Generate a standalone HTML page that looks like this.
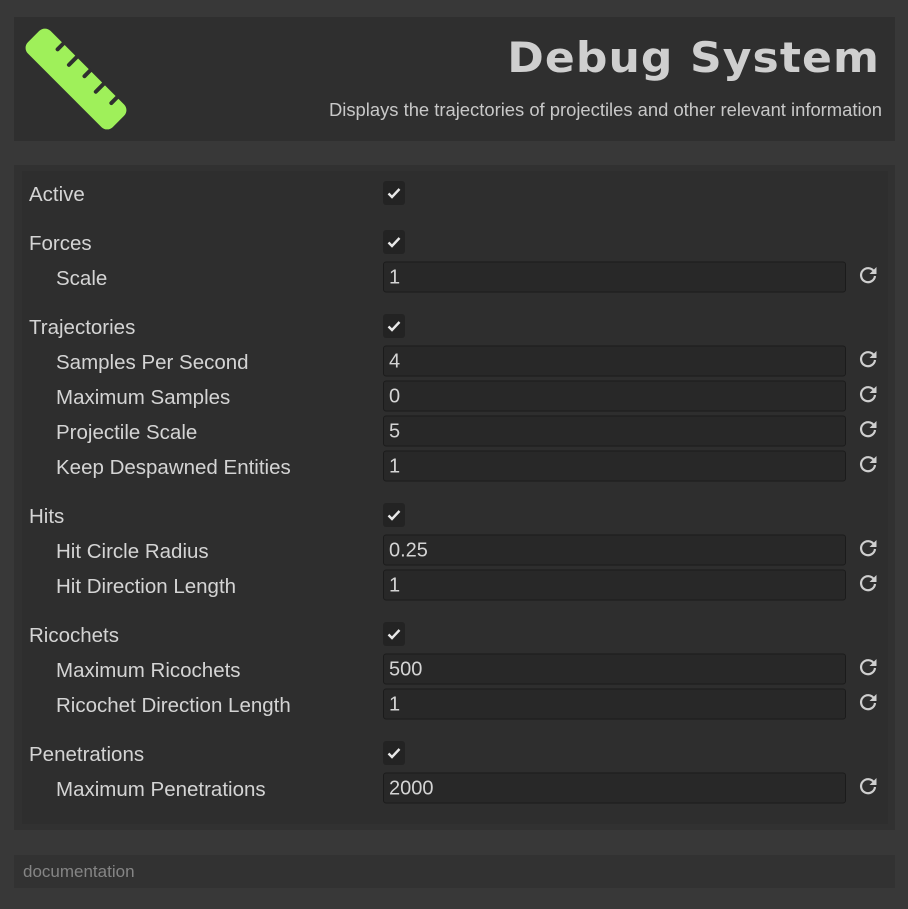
<!DOCTYPE html>
<html><head><meta charset="utf-8"><style>
*{margin:0;padding:0;box-sizing:border-box}
body{width:908px;height:909px;background:#383838;font-family:"Liberation Sans",sans-serif;position:relative;overflow:hidden;color:#d2d2d2}
.hdr{position:absolute;left:14px;top:17px;width:881px;height:124px;background:#2f2f2f}
.title{position:absolute;right:28px;top:33px;font-size:42px;font-weight:bold;color:#cfcfcf;letter-spacing:1px;transform:scaleX(1.05);transform-origin:right center;font-family:"DejaVu Sans",sans-serif}
.sub{position:absolute;right:26px;top:99px;font-size:18.4px;color:#c8c8c8}
.main{position:absolute;left:14px;top:165px;width:881px;height:665px;background:#313131}
.inner{position:absolute;left:22px;top:171px;width:866px;height:653px;background:#2e2e2e}
.lbl{position:absolute;font-size:20.5px;color:#d4d4d4;transform:translateY(-50%);margin-top:2px}
.cb{position:absolute;left:383px;width:22px;height:24px;background:#232323;border-radius:3px;transform:translateY(-50%)}
.cb svg{position:absolute;left:3px;top:4px}
.fld{position:absolute;left:383px;width:463px;height:31px;background:#282828;border:1px solid #1b1b1b;border-radius:3px;transform:translateY(-50%);font-size:20px;padding-left:5px;line-height:31px;color:#d4d4d4}
.rs{position:absolute;left:857px;transform:translateY(-50%)}
.foot{position:absolute;left:14px;top:855px;width:881px;height:33px;background:#323232}
.foot span{position:absolute;left:9px;top:7px;font-size:17px;color:#858585}
</style></head><body>
<div class="hdr"></div>
<svg style="position:absolute;left:0;top:0" width="160" height="150">
<g transform="translate(76,79) rotate(45)">
<rect x="-60" y="-16" width="120" height="32" rx="8" fill="#9ff05a"/>
<g stroke="#2f2f2f" stroke-width="4" stroke-linecap="round">
<line x1="-34" y1="-16" x2="-34" y2="-8"/>
<line x1="-15" y1="-16" x2="-15" y2="-5"/>
<line x1="4" y1="-16" x2="4" y2="-8"/>
<line x1="23" y1="-16" x2="23" y2="-5"/>
<line x1="42" y1="-16" x2="42" y2="-8"/>
</g></g></svg>
<div class="title">Debug System</div>
<div class="sub">Displays the trajectories of projectiles and other relevant information</div>
<div class="main"></div><div class="inner"></div>
<div class="foot"><span>documentation</span></div>
<div id="rows"></div>
<script>
var rows=[["Active",193,0,null],["Forces",242,0,null],["Scale",277,1,"1"],["Trajectories",326,0,null],["Samples Per Second",361,1,"4"],["Maximum Samples",396,1,"0"],["Projectile Scale",431,1,"5"],["Keep Despawned Entities",466,1,"1"],["Hits",515,0,null],["Hit Circle Radius",550,1,"0.25"],["Hit Direction Length",585,1,"1"],["Ricochets",634,0,null],["Maximum Ricochets",669,1,"500"],["Ricochet Direction Length",704,1,"1"],["Penetrations",753,0,null],["Maximum Penetrations",788,1,"2000"]];
var h="";
rows.forEach(function(r){
h+='<div class="lbl" style="left:'+(r[2]?56:29)+'px;top:'+r[1]+'px">'+r[0]+'</div>';
if(r[3]===null){h+='<div class="cb" style="top:'+r[1]+'px"><svg width="16" height="16" viewBox="0 0 16 16"><path d="M2.5 8.5 L6 12 L13.5 4" stroke="#e8e8e8" stroke-width="2.4" fill="none"/></svg></div>';}
else{h+='<div class="fld" style="top:'+r[1]+'px">'+r[3]+'</div><svg class="rs" style="top:'+(r[1]-2)+'px" width="22" height="22" viewBox="0 0 22 22"><path d="M17 7.5 A7 7 0 1 0 18 12" stroke="#cfcfcf" stroke-width="2.2" fill="none"/><path d="M19.5 3 L19.5 10 L12.5 10 Z" fill="#cfcfcf"/></svg>';}
});
document.getElementById("rows").innerHTML=h;
</script>
</body></html>
